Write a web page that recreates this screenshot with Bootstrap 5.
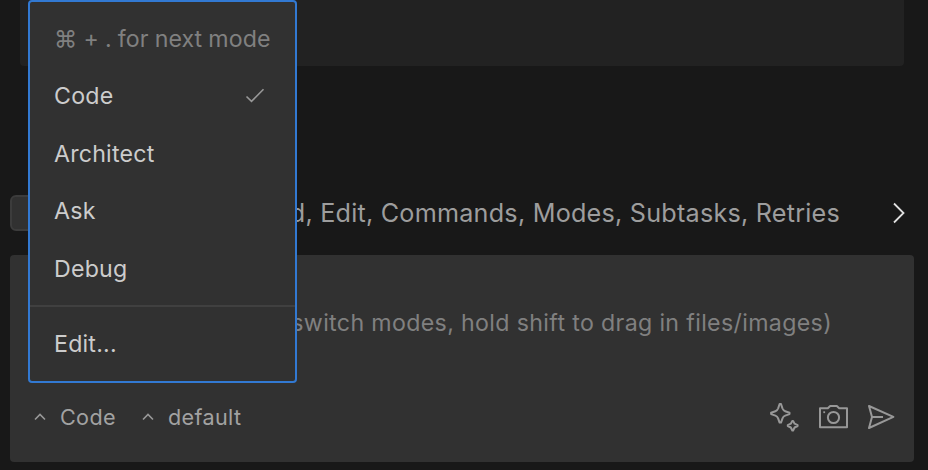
<!DOCTYPE html>
<html lang="en" data-bs-theme="dark">
<head>
<meta charset="utf-8">
<meta name="viewport" content="width=device-width, initial-scale=1">
<title>Mode selector</title>
<link href="https://cdn.jsdelivr.net/npm/bootstrap@5.3.0/dist/css/bootstrap.min.css" rel="stylesheet">
<style>
body { height: 470px; background: #181818; font-family: Inter, "Liberation Sans", sans-serif; color: #ccc; }
.history { height: 66px; margin: 0 24px 0 20px; background: #222; border-radius: 0 0 4px 4px; }
.approve { height: 36px; margin: 129px 14px 0 10px; }
.approve-box { width: 36px; height: 36px; background: #313131; border: 2px solid #3c3c3c; border-radius: 6px; }
.approve-text { font-size: 25.2px; letter-spacing: .22px; line-height: 36px; color: #9d9d9d; margin-right: 52px; }
.chevron { width: 14px; height: 22px; margin-right: 8px; }
.composer { height: 207px; margin: 24px 14px 0 10px; background: #313131; border-radius: 4px; }
.hint { font-size: 23.2px; letter-spacing: .34px; line-height: 36px; color: #808080; padding: 50px 82px 0 0; }
.tools { height: 36px; margin-bottom: 27px; padding: 0 18px 0 24px; }
.picker { font-size: 21.6px; letter-spacing: .35px; line-height: 36px; color: #a2a2a2; }
.picker + .picker { margin-left: 26px; }
.picker svg { width: 12px; height: 8px; margin-right: 14px; }
.mode-menu { left: 28px; top: 0; width: 269px; height: 383px; min-width: 0; padding: 8px 0 0; background: #313131; border: 2px solid #3279d2; border-radius: 4px; font-size: 23.2px; letter-spacing: .2px; }
.mode-menu .entry { height: 57.5px; padding: 0 28px 0 24px; color: #ccc; line-height: 36px; }
.mode-menu .entry.shortcut { color: #808080; letter-spacing: .04px; word-spacing: -.4px; }
.mode-menu hr { margin: 7.5px 0 8px; border-top: 2px solid #404040; opacity: 1; }
.stroke { fill: none; stroke: #989898; stroke-width: 1.8; }
.picker .stroke, .mode-menu .stroke { stroke-width: 1.6; }
.stroke-bold { stroke-width: 2; }
</style>
</head>
<body class="position-relative overflow-hidden m-0">
<div class="history"></div>
<div class="approve d-flex align-items-center">
  <div class="approve-box flex-shrink-0"></div>
  <div class="approve-text flex-grow-1 text-end text-nowrap">Read, Edit, Commands, Modes, Subtasks, Retries</div>
  <svg class="chevron" viewBox="0 0 14 22"><path d="M2 1.500l9.500 9.500L2 20.500" fill="none" stroke="#e0e0e0" stroke-width="1.800"/></svg>
</div>
<div class="composer d-flex flex-column justify-content-between">
  <div class="hint text-end text-nowrap">switch modes, hold shift to drag in files/images)</div>
  <div class="tools d-flex align-items-center justify-content-between">
    <div class="d-flex">
      <div class="picker d-flex align-items-center"><svg viewBox="0 0 12 8"><path class="stroke" d="M1 6.500L6 1.500l5 5"/></svg><span>Code</span></div>
      <div class="picker d-flex align-items-center"><svg viewBox="0 0 12 8"><path class="stroke" d="M1 6.500L6 1.500l5 5"/></svg><span>default</span></div>
    </div>
    <svg width="128" height="32" viewBox="768 401 128 32">
      <g class="stroke stroke-bold" stroke-linejoin="round">
        <path d="M779.600 404H781L782.500 408.500Q783.300 410.500 785.200 411.200L789.500 412.700V414.100L785.200 415.600Q783.300 416.300 782.500 418.300L781 422.600H779.600L778.100 418.300Q777.300 416.300 775.400 415.600L771.100 414.100V412.700L775.400 411.200Q777.300 410.500 778.100 408.500Z"/>
        <path d="M792.300 420.900H793.100L794.600 423.700L797.600 425.200V426L794.600 427.500L793.100 430.500H792.300L790.800 427.500L787.800 426V425.200L790.800 423.700Z"/>
        <path d="M820 408.300H827.800L830.200 406H836.800L839.200 408.300H847V427.300H820Z"/>
        <circle cx="833.500" cy="417.500" r="5.600"/>
        <path d="M869 406L893.400 416.900L869 428L872 416.900ZM872 416.900H883"/>
      </g>
      <rect x="823.300" y="411.300" width="1.800" height="1.800" fill="#989898"/>
    </svg>
  </div>
</div>
<div class="mode-menu position-absolute">
  <div class="entry shortcut d-flex align-items-center text-nowrap">⌘ + . for next mode</div>
  <div class="entry d-flex align-items-center justify-content-between"><span>Code</span>
    <svg width="22" height="18" viewBox="0 0 22 18"><path class="stroke" d="M1.500 9.500l5 4.800L18.500 2.300"/></svg>
  </div>
  <div class="entry d-flex align-items-center">Architect</div>
  <div class="entry d-flex align-items-center">Ask</div>
  <div class="entry d-flex align-items-center">Debug</div>
  <hr>
  <div class="entry d-flex align-items-center">Edit...</div>
</div>
<script src="https://cdn.jsdelivr.net/npm/bootstrap@5.3.0/dist/js/bootstrap.bundle.min.js"></script>
</body>
</html>
